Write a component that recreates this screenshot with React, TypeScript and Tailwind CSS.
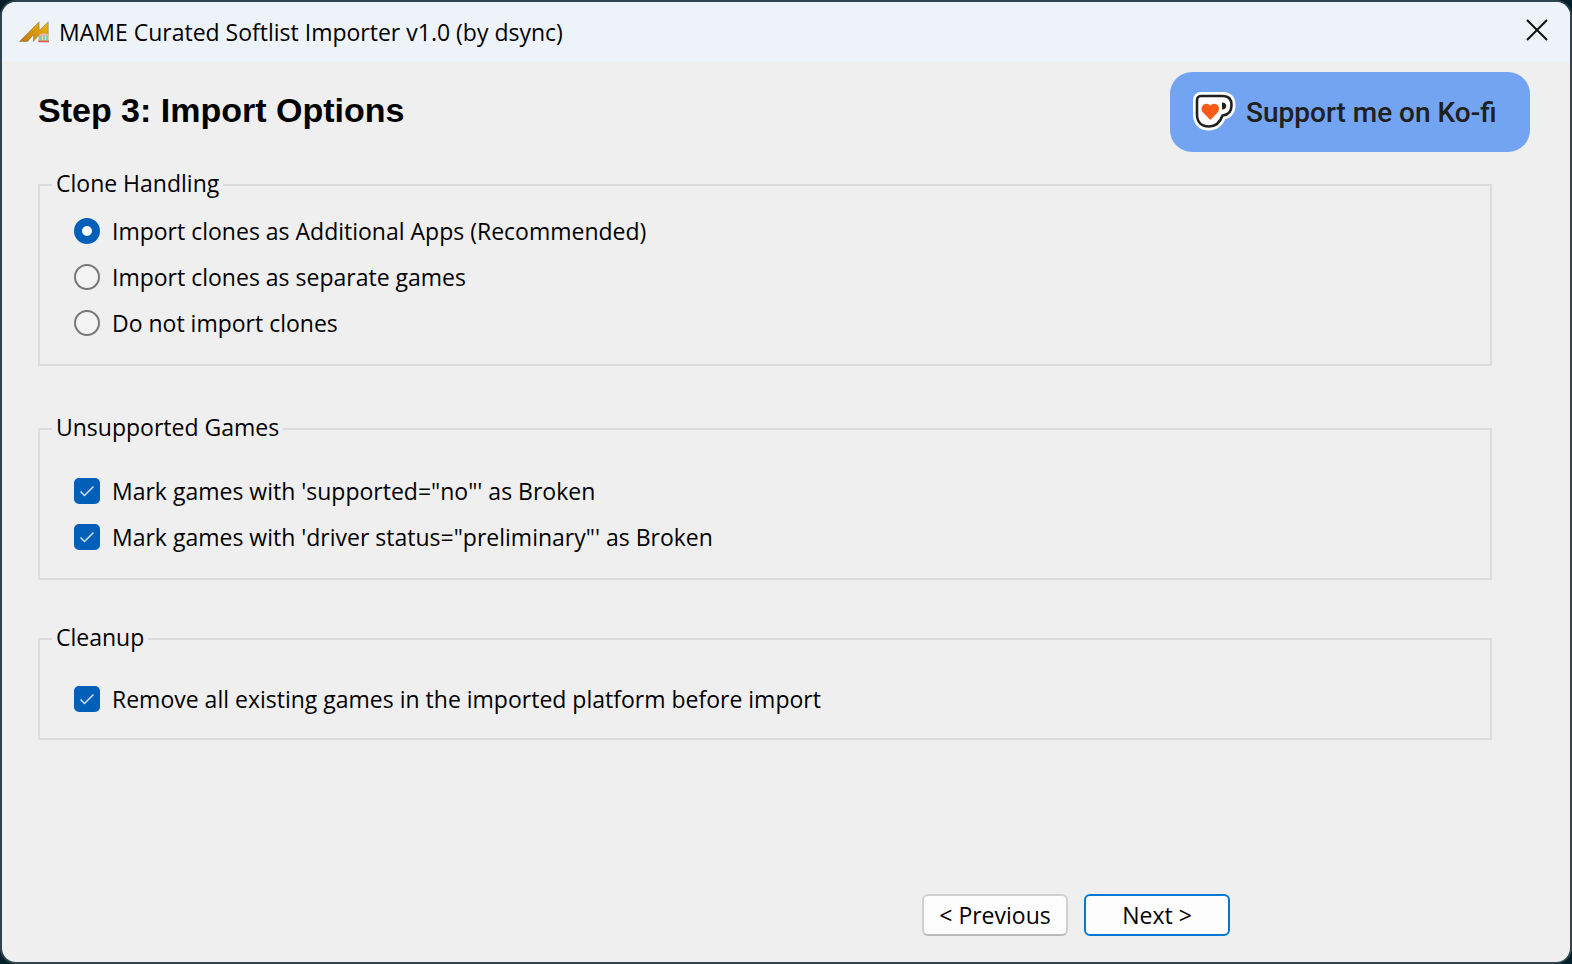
import { useState } from "react"
import type { ReactNode } from "react"

const cloneOptions = [
  { value: "additional", label: "Import clones as Additional Apps (Recommended)" },
  { value: "separate", label: "Import clones as separate games" },
  { value: "none", label: "Do not import clones" },
]

function AppIcon() {
  return (
    <svg width="30" height="22" viewBox="0 0 30 22" aria-hidden="true">
      <defs>
        <linearGradient id="gold" x1="0" y1="1" x2="1" y2="0">
          <stop offset="0" stopColor="#bd7608" />
          <stop offset="1" stopColor="#f0b90e" />
        </linearGradient>
      </defs>
      <path d="M.5 20.5 20 .8l.2 8.700L29.200.8v19.700h-9.200V14l-5.700 6.500.4-7L8.500 20.500z" fill="url(#gold)" stroke="#8d7c5a" strokeWidth=".6" />
      <path d="M20 14.500c0-3 9.500-3 9.500 0z" fill="#f3b6ae" />
      <path d="M20.500 14.500h9v5h-9z" fill="#f5e3a0" />
      <path d="M22 14.500v5M25 14.500v5M28 14.500v5" stroke="#58bcd0" strokeWidth="1.400" />
      <path d="M19.500 20.500h10.500" stroke="#e05a50" strokeWidth="1.500" />
    </svg>
  )
}

function KofiCup() {
  return (
    <svg width="42" height="40" viewBox="0 0 42 40" className="overflow-visible" aria-hidden="true">
      <path
        d="M9 4h22c6 0 8.500 3.500 8.500 9 0 6.500-3.500 10-9 10.500C28 30.500 24 34.500 17 34.500 9.500 34.500 5 30 5 22.500V8.500C5 5.500 6.500 4 9 4z"
        fill="#fff"
        stroke="#fff"
        strokeWidth="8"
        strokeLinejoin="round"
      />
      <path
        d="M9 4h22c6 0 8.500 3.500 8.500 9 0 6.500-3.500 10-9 10.500C28 30.500 24 34.500 17 34.500 9.500 34.500 5 30 5 22.500V8.500C5 5.500 6.500 4 9 4z"
        fill="#fff"
        stroke="#202020"
        strokeWidth="2.600"
        strokeLinejoin="round"
      />
      <path d="M30 10.500c3 0 4.200 1.200 4.200 3.500S33 17.500 30 17.500z" fill="#202020" />
      <path d="M18.300 28 11 20.500c-4.500-5.500 2.500-12 7.300-7 4.800-5 11.800 1.500 7.300 7z" fill="#ff5a16" />
    </svg>
  )
}

function Group({ title, className, children }: { title: string; className: string; children: ReactNode }) {
  return (
    <fieldset className={`border-2 border-[#dcdcdc] pl-[34px] pr-4 ${className}`}>
      <legend className="-ml-[22px] px-1 pb-1 leading-[22px]">{title}</legend>
      {children}
    </fieldset>
  )
}

function RadioRow({ label, checked, onChange }: { label: string; checked: boolean; onChange: () => void }) {
  return (
    <label className="flex h-[46px] items-center gap-3">
      <input
        type="radio"
        name="clones"
        checked={checked}
        onChange={onChange}
        className="size-[26px] shrink-0 appearance-none rounded-full border-2 border-[#777] bg-[#f3f3f3] checked:border-8 checked:border-[#005fb8] checked:bg-white"
      />
      <span>{label}</span>
    </label>
  )
}

function CheckRow({ label }: { label: string }) {
  return (
    <label className="flex h-[46px] items-center gap-3">
      <span className="grid size-[26px] shrink-0">
        <input
          type="checkbox"
          defaultChecked
          className="peer col-start-1 row-start-1 size-[26px] appearance-none rounded-[5px] border-2 border-[#777] bg-[#f3f3f3] checked:border-[#005fb8] checked:bg-[#005fb8]"
        />
        <svg
          viewBox="0 0 26 26"
          className="pointer-events-none invisible col-start-1 row-start-1 size-[26px] peer-checked:visible"
          aria-hidden="true"
        >
          <path d="M6.500 13.500 10.500 17.500 19.500 8.500" fill="none" stroke="#cfe2f4" strokeWidth="1.500" />
        </svg>
      </span>
      <span>{label}</span>
    </label>
  )
}

export default function App() {
  const [clones, setClones] = useState("additional")

  return (
    <div className="min-h-screen bg-[#03202b]">
      <div className="flex min-h-screen flex-col overflow-hidden rounded-2xl border-2 border-[#2f444c] bg-[#efefef] font-['Open_Sans','Noto_Sans',sans-serif] text-[23px] text-black">
        <header className="flex h-[60px] items-center bg-[#eef3f9] pl-[17px] pr-[22px]">
          <AppIcon />
          <h1 className="ml-2.5 flex-1 text-[23px] leading-[30px]">MAME Curated Softlist Importer v1.0 (by dsync)</h1>
          <button type="button" aria-label="Close" className="pb-1">
            <svg width="22" height="22" viewBox="0 0 22 22" aria-hidden="true">
              <path d="M1 1 21 21M21 1 1 21" stroke="#111" strokeWidth="2" />
            </svg>
          </button>
        </header>

        <main className="flex flex-1 flex-col pl-9">
          <div className="flex items-start justify-between pr-10 pt-2.5">
            <h2 className="mt-[18px] font-['Liberation_Sans',Arial,sans-serif] text-[34px] font-bold leading-10">
              Step 3: Import Options
            </h2>
            <a
              href="#kofi"
              className="flex h-20 w-[360px] items-center gap-3 rounded-[22px] bg-[#72a4f2] pl-[22px] font-['Roboto',sans-serif] text-[28px] font-medium text-[#202020]"
            >
              <KofiCup />
              <span className="pt-0.5">Support me on Ko-fi</span>
            </a>
          </div>

          <div className="mr-[78px] mt-5 flex flex-col">
            <Group title="Clone Handling" className="pb-[18px] pt-2.5">
              {cloneOptions.map((option) => (
                <RadioRow
                  key={option.value}
                  label={option.label}
                  checked={clones === option.value}
                  onChange={() => setClones(option.value)}
                />
              ))}
            </Group>

            <Group title="Unsupported Games" className="mt-[50px] pb-[18px] pt-[26px]">
              <CheckRow label={`Mark games with 'supported="no"' as Broken`} />
              <CheckRow label={`Mark games with 'driver status="preliminary"' as Broken`} />
            </Group>

            <Group title="Cleanup" className="mt-[46px] pb-4 pt-6">
              <CheckRow label="Remove all existing games in the imported platform before import" />
            </Group>
          </div>

          <footer className="mt-auto flex justify-end gap-4 pb-[26px] pr-[340px]">
            <button
              type="button"
              className="h-[42px] w-[146px] rounded-md border-2 border-[#d0d0d0] border-b-[#bababa] bg-[#fdfdfd]"
            >
              &lt; Previous
            </button>
            <button type="button" className="h-[42px] w-[146px] rounded-md border-2 border-[#0078d4] bg-[#fdfdfd]">
              Next &gt;
            </button>
          </footer>
        </main>
      </div>
    </div>
  )
}
